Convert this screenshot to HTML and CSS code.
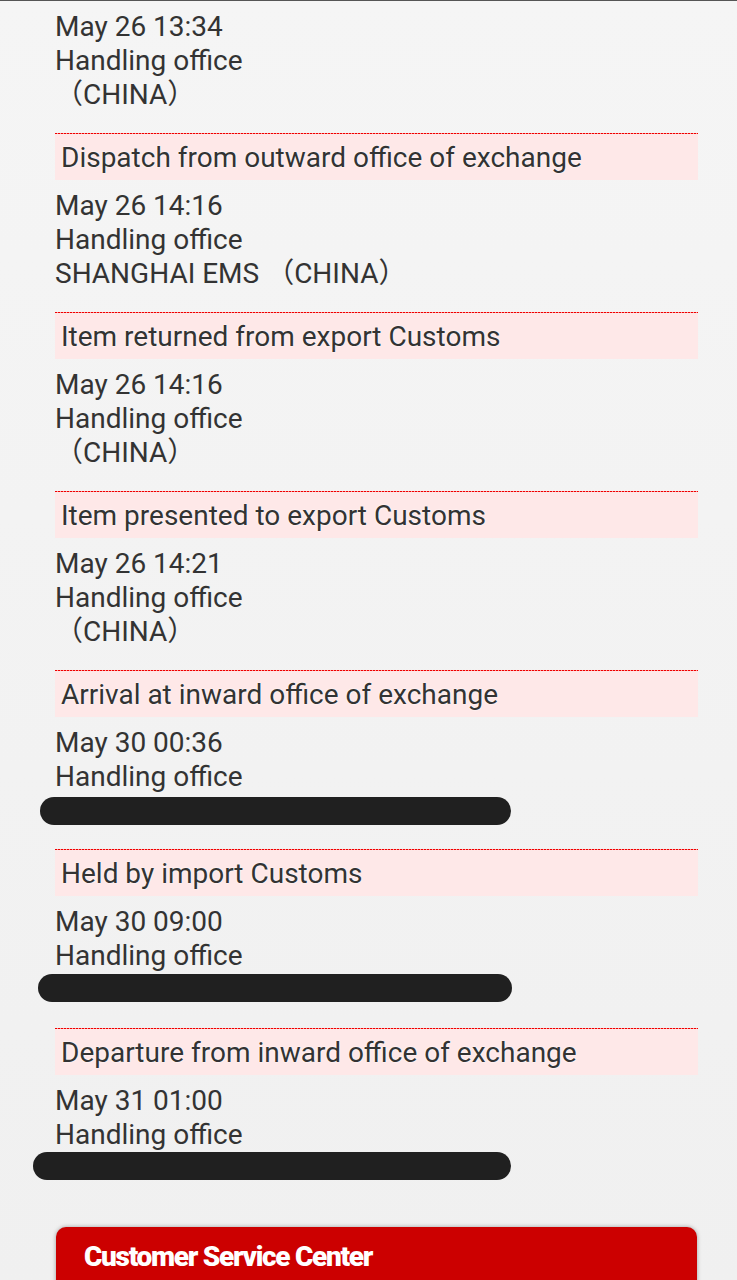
FILE: index.html
```html
<!DOCTYPE html>
<html lang="en">
<head>
  <meta charset="utf-8" />
  <title>Tracking history</title>
  <link rel="stylesheet" href="styles.css">
</head>
<body>
  <div id="main-body">

    <div class="entry first">
      <div class="p">May 26 13:34</div>
      <div class="p">Handling office</div>
      <div class="p">（CHINA）</div>
    </div>

    <h3>Dispatch from outward office of exchange</h3>
    <div class="entry">
      <div class="p">May 26 14:16</div>
      <div class="p">Handling office</div>
      <div class="p">SHANGHAI EMS （CHINA）</div>
    </div>

    <h3>Item returned from export Customs</h3>
    <div class="entry">
      <div class="p">May 26 14:16</div>
      <div class="p">Handling office</div>
      <div class="p">（CHINA）</div>
    </div>

    <h3>Item presented to export Customs</h3>
    <div class="entry">
      <div class="p">May 26 14:21</div>
      <div class="p">Handling office</div>
      <div class="p">（CHINA）</div>
    </div>

    <h3>Arrival at inward office of exchange</h3>
    <div class="entry">
      <div class="p">May 30 00:36</div>
      <div class="p">Handling office</div>
      <div class="p"><span class="redact r1"></span></div>
    </div>

    <h3>Held by import Customs</h3>
    <div class="entry">
      <div class="p">May 30 09:00</div>
      <div class="p">Handling office</div>
      <div class="p"><span class="redact r2"></span></div>
    </div>

    <h3>Departure from inward office of exchange</h3>
    <div class="entry">
      <div class="p">May 31 01:00</div>
      <div class="p">Handling office</div>
      <div class="p"><span class="redact r3"></span></div>
    </div>

    <div class="service">
      <h2>Customer Service Center</h2>
    </div>

  </div>
</body>
</html>
```

FILE: styles.css
```css
html, body { margin: 0; padding: 0; font-family: Roboto, "Noto Sans CJK SC", sans-serif; font-size: 28px; line-height: 34px; color: #333; }
body { background: linear-gradient(#f5f5f5, #f0f0f0); border-top: 1px solid #555; min-height: 1279px; }
#main-body { margin: 0 39px 0 55px; }
h2, h3 { margin: 0; padding: 0; font-weight: normal; font-size: 100%; }
h3 { border-top: 1px solid transparent; background: repeating-linear-gradient(90deg, #e00 0 2px, #f99 2px 3px) 0 0 / 100% 1px no-repeat border-box, #fee8e8; height: 46px; line-height: 48px; padding: 0 6px; text-shadow: 0 0 2px #fff, 0 0 1px #fff; }
.entry { padding: 9px 0 21px; }
.p { height: 34px; white-space: nowrap; }
.redact { display: block; position: relative; height: 28px; border-radius: 14px; background: #202020; top: 3px; }
.r1 { margin-left: -15px; width: 471px; }
.r2 { margin-left: -17px; width: 474px; top: 1px; }
.r3 { margin-left: -22px; width: 478px; top: 0; }
.service { margin: 20px 1px 0 1px; background: #cc0000; border-radius: 10px 10px 0 0; box-shadow: 0 0 4px rgba(0,0,0,.35); padding: 0 28px; height: 60px; }
.service h2 { color: #fff; font-weight: 900; font-size: 28px; line-height: 60px; letter-spacing: -1.3px; }
```
